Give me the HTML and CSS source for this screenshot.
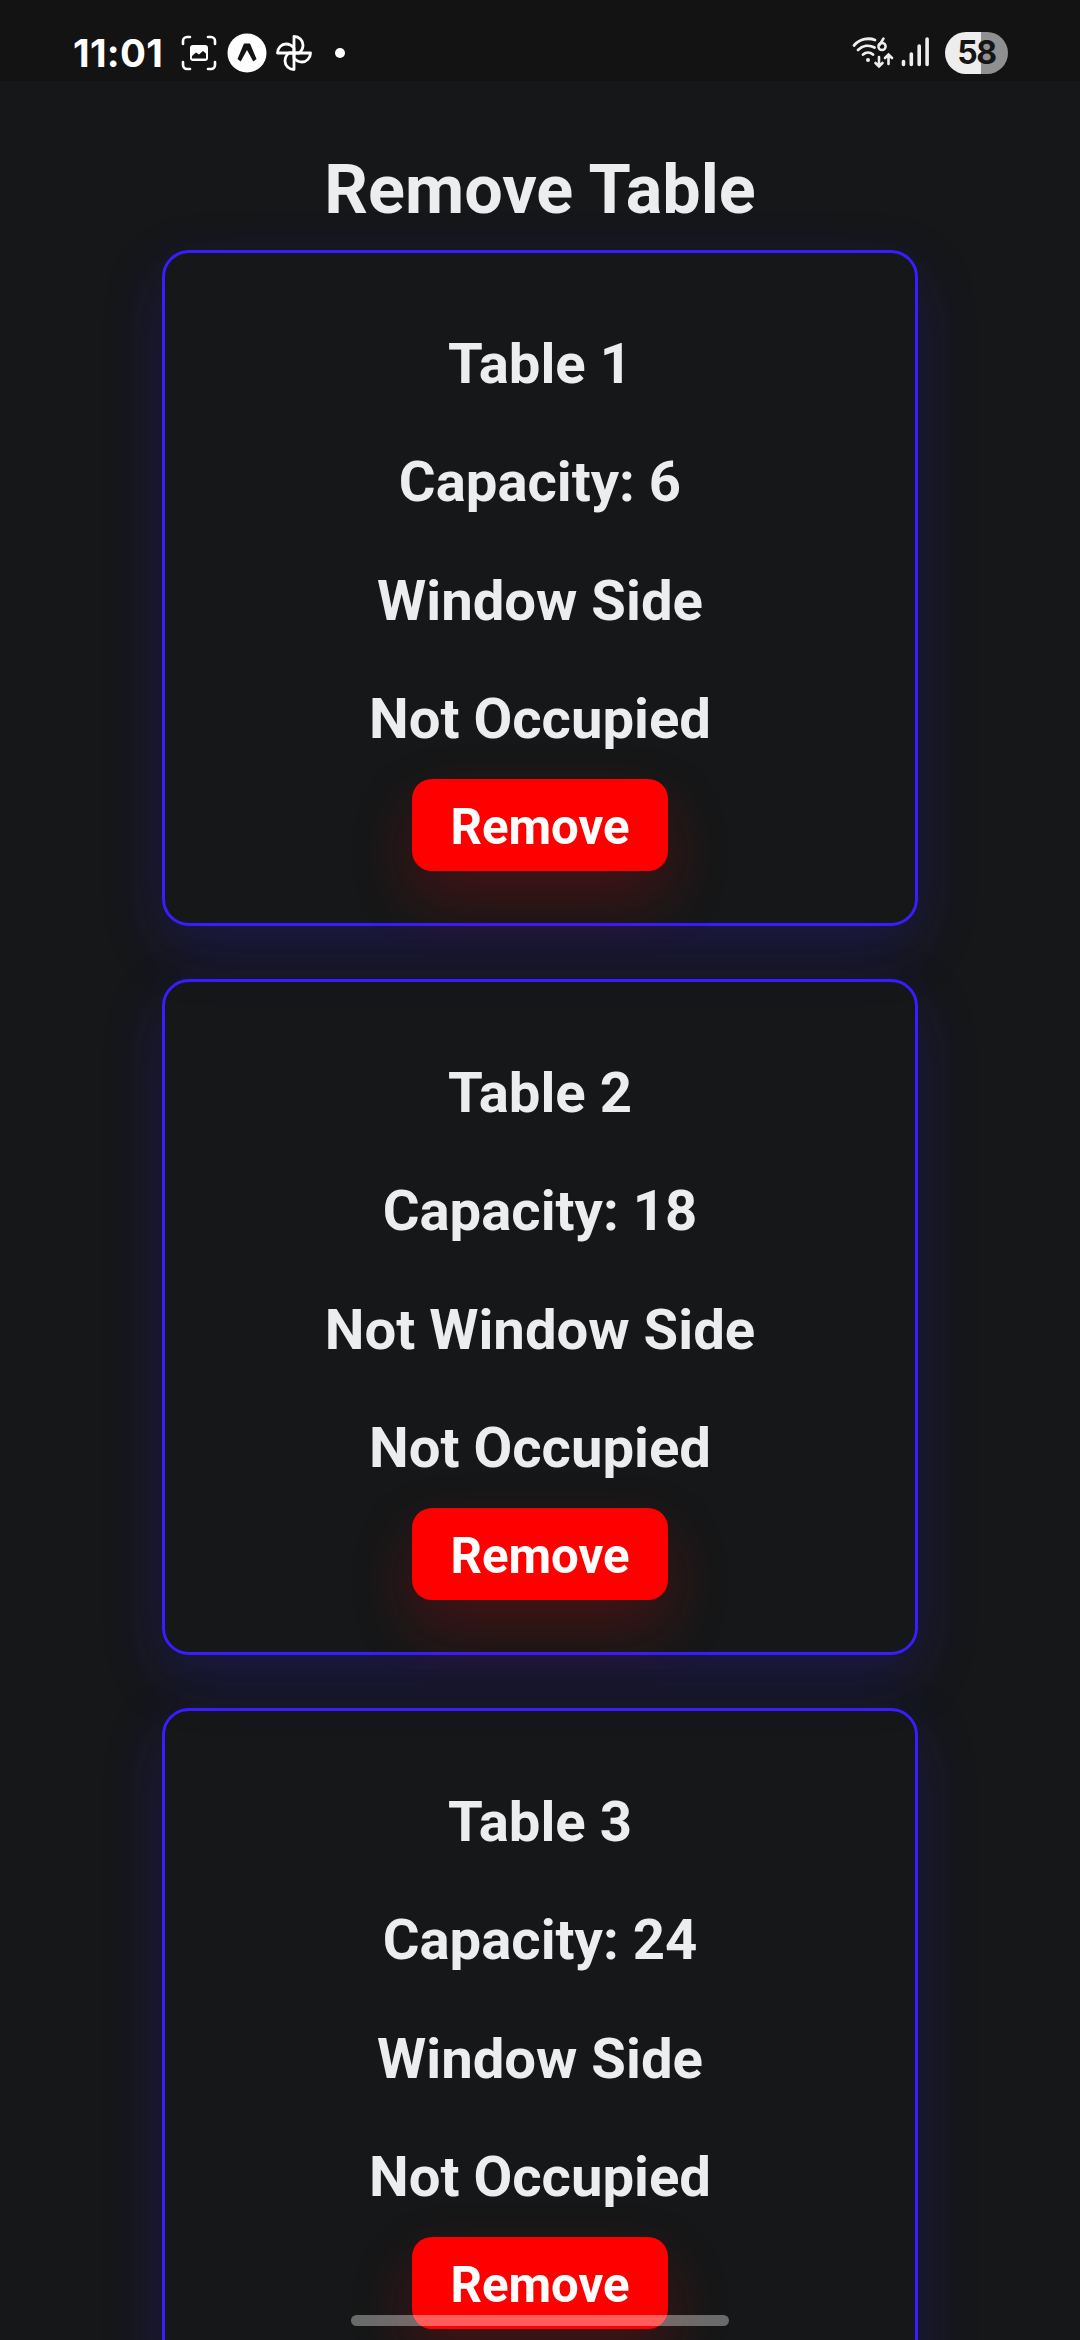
FILE: index.html
```
<!DOCTYPE html>
<html lang="en">
<head>
<meta charset="utf-8">
<title>Remove Table</title>
<link rel="stylesheet" href="styles.css">
</head>
<body>
<div class="screen">
  <header class="status">
    <div class="status-left">
      <span class="clock">11:01</span>
      <svg class="ico-shot" width="36" height="36" viewBox="0 0 36 36" fill="none" stroke="#fff" stroke-width="2.600" stroke-linecap="round">
        <path d="M2 9V6a4 4 0 0 1 4-4h3M27 2h3a4 4 0 0 1 4 4v3M34 27v3a4 4 0 0 1-4 4h-3M9 34H6a4 4 0 0 1-4-4v-3"/>
        <rect x="9" y="10" width="18" height="16" rx="3" fill="#fff" stroke="none"/>
        <path d="M11 23.500V21l4-3.500 3 2 4-3.500 3 2.500v5z" fill="#131313" stroke="none"/>
      </svg>
      <svg class="ico-expo" width="40" height="40" viewBox="0 0 40 40">
        <circle cx="20" cy="20" r="19.500" fill="#fff"/>
        <path d="M17 10.500h6l6.500 15.500-3.200 2.500L20 17 13.700 28.500 10.500 26z" fill="#131313"/>
      </svg>
      <svg class="ico-fan" width="38" height="38" viewBox="0 0 38 38" fill="none" stroke="#fff" stroke-width="2.800" stroke-linejoin="round">
        <path d="M19 19V2.500c5 0 9 4 9 8.500 0 3-1.500 6-4 8z"/>
        <path d="M19 19h16.500c0 5-4 9-8.500 9-3 0-6-1.500-8-4z"/>
        <path d="M19 19v16.500c-5 0-9-4-9-8.500 0-3 1.500-6 4-8z"/>
        <path d="M19 19H2.500c0-5 4-9 8.500-9 3 0 6 1.500 8 4z"/>
      </svg>
      <span class="dot"></span>
    </div>
    <div class="status-right">
      <svg class="ico-wifi" width="43" height="34" viewBox="0 0 43 34" fill="none" stroke="#eee" stroke-width="2.800" stroke-linecap="round">
        <path d="M2 9.500C8 2.500 17 1.500 23 4M6 14c4.500-4.500 11-5.500 16.500-2.500M11 18.500c3-2.600 7-2.600 10 0"/>
        <circle cx="16" cy="24" r="2" fill="#eee" stroke="none"/>
        <path d="M31.500 2.500L27.500 9" stroke-width="2.500"/>
        <circle cx="30" cy="10.500" r="3.600" stroke-width="2.500"/>
        <path d="M27 21v9M23.500 27l3.500 3.500 3.500-3.500M36.500 28v-9M33 22l3.500-3.500L40 22" stroke-width="2.600"/>
      </svg>
      <svg class="ico-signal" width="29" height="30" viewBox="0 0 29 30" stroke="#eee" stroke-width="3.600" stroke-linecap="round">
        <path d="M2.500 24.500v3M10.300 17v10.500M18.200 9v18.500M26.100 2v25.500"/>
      </svg>
      <span class="battery">58</span>
    </div>
  </header>
  <main class="page">
    <h1 class="title">Remove Table</h1>
    <section class="card">
      <p class="line">Table 1</p>
      <p class="line">Capacity: 6</p>
      <p class="line">Window Side</p>
      <p class="line">Not Occupied</p>
      <button class="remove">Remove</button>
    </section>
    <section class="card">
      <p class="line">Table 2</p>
      <p class="line">Capacity: 18</p>
      <p class="line">Not Window Side</p>
      <p class="line">Not Occupied</p>
      <button class="remove">Remove</button>
    </section>
    <section class="card">
      <p class="line">Table 3</p>
      <p class="line">Capacity: 24</p>
      <p class="line">Window Side</p>
      <p class="line">Not Occupied</p>
      <button class="remove">Remove</button>
    </section>
  </main>
  <div class="gesture-bar"></div>
</div>
</body>
</html>
```

FILE: styles.css
```
* {
  box-sizing: border-box;
}

body {
  margin: 0;
  background: #151718;
  font-family: Roboto, sans-serif;
}

.screen {
  position: relative;
  width: 1080px;
  height: 2340px;
  overflow: hidden;
  background: #151718;
}

.status {
  display: flex;
  justify-content: space-between;
  height: 81px;
  padding: 0 72px 0 73px;
  background: #131313;
}

.status-left,
.status-right {
  display: flex;
  align-items: flex-start;
}

.clock {
  width: 108px;
  margin-top: 26px;
  font: 700 38.500px/54px Inter, sans-serif;
  letter-spacing: 0.300px;
  color: #fff;
}

.ico-shot {
  margin-top: 35px;
}

.ico-expo {
  margin: 33px 0 0 10px;
}

.ico-fan {
  margin: 34px 0 0 8px;
}

.dot {
  width: 10px;
  height: 10px;
  margin: 48px 0 0 22px;
  border-radius: 50%;
  background: #fff;
}

.ico-wifi {
  margin-top: 36px;
}

.ico-signal {
  margin: 37px 0 0 6px;
}

.battery {
  width: 63px;
  height: 42px;
  margin: 32px 0 0 15px;
  border-radius: 21px;
  background: linear-gradient(90deg, #ededed 36px, #909090 36px);
  font: 700 32px/42px Inter, sans-serif;
  letter-spacing: -1.500px;
  text-align: center;
  color: #151515;
}

.page {
  display: flex;
  flex-direction: column;
  align-items: center;
  gap: 53px;
}

.title {
  margin: 78px 0 -25px;
  font-size: 68.300px;
  font-weight: 700;
  line-height: 63px;
  color: #ecedee;
}

.card {
  display: flex;
  flex-direction: column;
  align-items: center;
  flex: none;
  width: 756px;
  height: 676px;
  padding-top: 52px;
  border: 3px solid #371dff;
  border-radius: 27px;
  box-shadow: 0 21px 60px rgba(55, 29, 255, 0.21);
}

.line {
  margin: 0;
  font-size: 56.250px;
  font-weight: 700;
  line-height: 118.400px;
  color: #ecedee;
}

.remove {
  width: 256px;
  height: 92px;
  padding: 5px 0 0;
  border: 0;
  border-radius: 20px;
  background: #f00;
  box-shadow: 0 27px 62px rgba(255, 0, 0, 0.21);
  font: 700 49.200px/87px Roboto, sans-serif;
  color: #fff;
}

.gesture-bar {
  position: absolute;
  left: 351px;
  bottom: 14px;
  width: 378px;
  height: 11px;
  border-radius: 6px;
  background: rgba(255, 255, 255, 0.360);
}
```
